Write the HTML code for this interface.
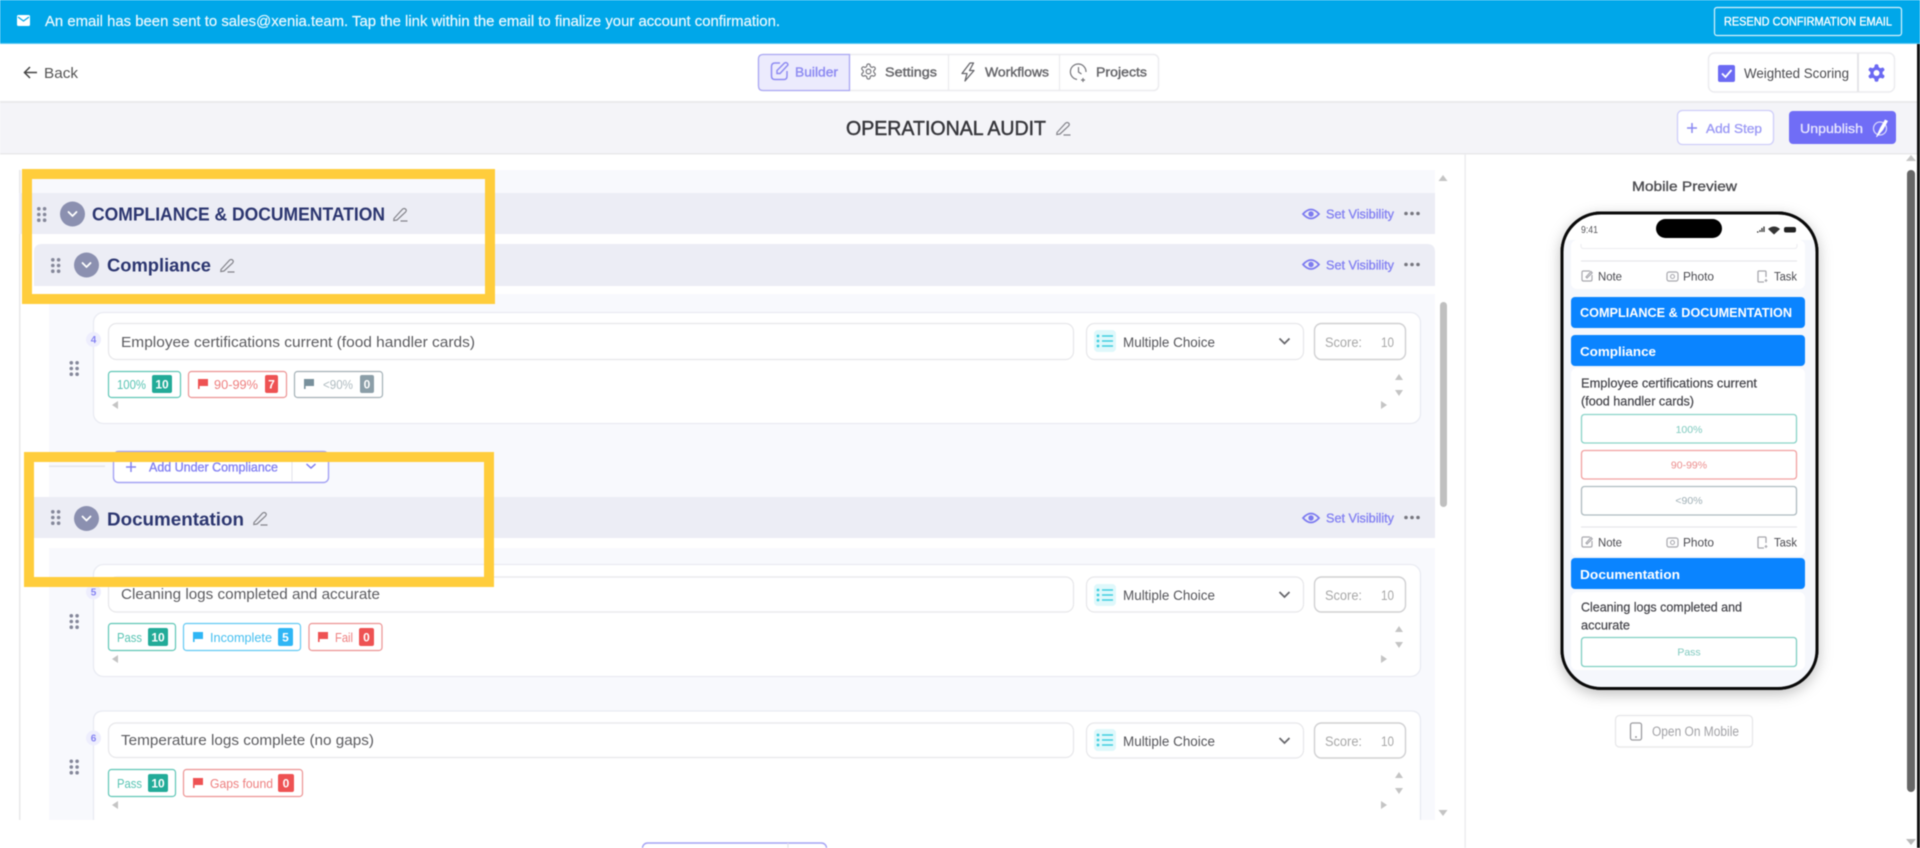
<!DOCTYPE html>
<html lang="en"><head><meta charset="utf-8"><title>Operational Audit Builder</title>
<style>
html,body{margin:0;padding:0;width:1920px;height:848px;overflow:hidden;background:#fff}
svg{display:block;position:absolute;left:0;top:0;filter:blur(.45px)}
text{font-family:"Liberation Sans",sans-serif;font-size:14px}
.b{font-weight:700}
.md{stroke-width:.35px;paint-order:stroke}
.in{fill:#5c5c60;font-size:15px}
.mc{fill:#55555a;font-size:14px}
.sc{fill:#a8a8a8;font-size:13.5px}
.sv{fill:#8583f2;stroke:#8583f2;stroke-width:.35px;font-size:12.5px}
.ch{font-size:12.5px}
.bd{font-size:12px;font-weight:700;fill:#fff;text-anchor:middle}
.tab{fill:#66666a;stroke:#66666a;stroke-width:.4px;font-size:13px}
.pt{fill:#4a4a50;font-size:11.5px}
.pq{fill:#44444a;font-size:12.5px}
.bar{fill:#fff;font-size:13px;font-weight:700}
.op{font-size:10.5px;text-anchor:middle}
</style></head><body>
<svg width="1920" height="848" viewBox="0 0 1920 848" xmlns="http://www.w3.org/2000/svg">
<defs>
<clipPath id="phc"><rect x="1563" y="214" width="253" height="473" rx="37"/></clipPath>
<path id="gear" d="M12.22 2h-.44a2 2 0 0 0-2 2v.18a2 2 0 0 1-1 1.73l-.43.25a2 2 0 0 1-2 0l-.15-.08a2 2 0 0 0-2.73.73l-.22.38a2 2 0 0 0 .73 2.73l.15.1a2 2 0 0 1 1 1.72v.51a2 2 0 0 1-1 1.74l-.15.09a2 2 0 0 0-.73 2.73l.22.38a2 2 0 0 0 2.73.73l.15-.08a2 2 0 0 1 2 0l.43.25a2 2 0 0 1 1 1.73V20a2 2 0 0 0 2 2h.44a2 2 0 0 0 2-2v-.18a2 2 0 0 1 1-1.73l.43-.25a2 2 0 0 1 2 0l.15.08a2 2 0 0 0 2.73-.73l.22-.39a2 2 0 0 0-.73-2.73l-.15-.08a2 2 0 0 1-1-1.74v-.5a2 2 0 0 1 1-1.74l.15-.09a2 2 0 0 0 .73-2.73l-.22-.38a2 2 0 0 0-2.73-.73l-.15.08a2 2 0 0 1-2 0l-.43-.25a2 2 0 0 1-1-1.73V4a2 2 0 0 0-2-2z"/>
<g id="d"><g fill="#85889a"><circle cx="1.8" cy="1.8" r="1.8"/><circle cx="7.6" cy="1.8" r="1.8"/><circle cx="1.8" cy="7.5" r="1.8"/><circle cx="7.6" cy="7.5" r="1.8"/><circle cx="1.8" cy="13.2" r="1.8"/><circle cx="7.6" cy="13.2" r="1.8"/></g></g>
<g id="c"><circle r="12.5" fill="#8b90b0"/><path d="M-4-2 0 2 4-2" fill="none" stroke="#fff" stroke-width="1.8" stroke-linecap="round" stroke-linejoin="round"/></g>
<g id="p"><path d="M1 11.5 9.5 2.2Q11 .8 12.5 2T12.6 5L4 13 .8 13.5ZM7.5 14H14.5" fill="none" stroke="#85858c" stroke-width="1.2"/></g>
<g id="e"><path d="M-8 0Q0-9 8 0 0 9-8 0Z" fill="none" stroke="#7d7bf0" stroke-width="1.7"/><circle r="2.7" fill="#7d7bf0"/></g>
<g id="m"><circle cx="-6" r="1.8" fill="#77777f"/><circle r="1.8" fill="#77777f"/><circle cx="6" r="1.8" fill="#77777f"/></g>
<g id="f"><path d="M0 0H10V7H1.6V10H0Z"/></g>
<g id="l"><rect width="22" height="22" rx="4" fill="#dff8fb"/><g stroke="#3fcfe0" stroke-width="1.6"><path d="M8 6H19M8 11H19M8 16H19"/></g><g fill="#3fcfe0"><circle cx="4" cy="6" r="1.4"/><circle cx="4" cy="11" r="1.4"/><circle cx="4" cy="16" r="1.4"/></g></g>
<g id="nt"><path d="M9 1H2.5Q1 1 1 2.5V9.5Q1 11 2.5 11H9.5Q11 11 11 9.5V5M5 7 10 1.5 11.2 2.8 6 8Z" fill="none" stroke="#a8a8ae" stroke-width="1.2"/></g>
<g id="ph"><rect x="0" y="2" width="11" height="9" rx="2" fill="none" stroke="#a8a8ae" stroke-width="1.2"/><circle cx="5.5" cy="6.5" r="2" fill="none" stroke="#a8a8ae" stroke-width="1.1"/></g>
<g id="tk"><path d="M7 12H2Q1 12 1 11V2Q1 1 2 1H8Q9 1 9 2V7" fill="none" stroke="#a8a8ae" stroke-width="1.3"/><path d="M9 9V12M7.5 10.5H10.5" stroke="#a8a8ae" stroke-width="1.1"/></g>
</defs>

<!-- base -->
<rect width="1920" height="848" fill="#fff"/>
<rect width="1920" height="43" fill="#00a7e9"/>
<rect y="43" width="1920" height="1" fill="#5cc9f2"/>
<rect y="101" width="1920" height="2" fill="#e9e9ec"/>
<rect y="103" width="1920" height="50" fill="#f4f4f8"/>
<rect y="153" width="1920" height="1.5" fill="#e8e8eb"/>
<rect x="1917" y="44" width="3" height="804" fill="#111"/>

<!-- banner -->
<rect x="17" y="15" width="13" height="11" rx="1.5" fill="#fff"/>
<path d="M18 17 23.500 21 29 17" fill="none" stroke="#00a7e9" stroke-width="1.2"/>
<text x="45" y="26" textLength="735" lengthAdjust="spacingAndGlyphs" fill="#eaf8fe" stroke="#eaf8fe" stroke-width=".2" style="font-size:14.5px">An email has been sent to sales@xenia.team. Tap the link within the email to finalize your account confirmation.</text>
<rect x="1714.5" y="7.5" width="187" height="28" rx="2.5" fill="none" stroke="#d8f2fc" stroke-width="1.2"/>
<text x="1724" y="25.5" textLength="168" lengthAdjust="spacingAndGlyphs" fill="#fff" stroke="#fff" stroke-width=".3" style="font-size:12px">RESEND CONFIRMATION EMAIL</text>

<!-- nav -->
<path d="M37 72.500H25M30 67 24.500 72.500 30 78" fill="none" stroke="#444" stroke-width="1.5"/>
<text x="44" y="78" textLength="34" lengthAdjust="spacingAndGlyphs" fill="#555" style="font-size:14.5px">Back</text>

<rect x="758.5" y="54.5" width="400" height="36" rx="5" fill="#fff" stroke="#ececef" stroke-width="1.5"/>
<path d="M763 54.500H849.500V90.500H763Q758.500 90.500 758.500 86V59Q758.500 54.500 763 54.500Z" fill="#ecebfd" stroke="#aaa7f3" stroke-width="1.3"/>
<path d="M948.500 55V90M1059.500 55V90" stroke="#ececef" stroke-width="1.3"/>
<path d="M780 63H775Q771.500 63 771.500 66.500V76Q771.500 79.500 775 79.500H784Q787 79.500 787 76V71M777 73.500V70.500L784.500 63Q786.500 62 787.500 63.500T787 66L780 73.500Z" fill="none" stroke="#8f8cf2" stroke-width="1.5"/>
<text x="795" y="76.5" textLength="43" lengthAdjust="spacingAndGlyphs" class="tab" style="fill:#8f8cf2;stroke:#8f8cf2">Builder</text>
<use href="#gear" transform="translate(859.5 62.5) scale(.75)" fill="none" stroke="#77777c" stroke-width="1.6"/>
<circle cx="868.5" cy="71.5" r="2.4" fill="none" stroke="#77777c" stroke-width="1.2"/>
<text x="885" y="76.5" textLength="52" lengthAdjust="spacingAndGlyphs" class="tab">Settings</text>
<path d="M970 63 962 73.500H967L965 81 974 70.500H969.500L973.500 63Z" fill="none" stroke="#66666b" stroke-width="1.3" stroke-linejoin="round"/>
<text x="985" y="76.5" textLength="64" lengthAdjust="spacingAndGlyphs" class="tab">Workflows</text>
<path d="M1077 79.500A7.800 7.800 0 1 1 1086 72M1078.500 67V72L1081.500 74M1083 78V82M1081 80H1085" fill="none" stroke="#77777c" stroke-width="1.2"/>
<text x="1096" y="76.5" textLength="51" lengthAdjust="spacingAndGlyphs" class="tab">Projects</text>

<rect x="1708.5" y="53" width="186" height="39" rx="6" fill="#fff" stroke="#ececef" stroke-width="1.5"/>
<path d="M1858 53V92" stroke="#e5e5e8" stroke-width="2"/>
<rect x="1718" y="65" width="17" height="17" rx="2" fill="#6c6af3"/>
<path d="M1722 73.500 1725.500 77 1731.500 70" fill="none" stroke="#fff" stroke-width="1.8"/>
<text x="1744" y="78" textLength="105" lengthAdjust="spacingAndGlyphs" fill="#4c4c50" style="font-size:13.5px">Weighted Scoring</text>
<use href="#gear" transform="translate(1866 62.5) scale(.875)" fill="#6c6af3"/>
<circle cx="1876.5" cy="73" r="3" fill="#fff"/>

<!-- title -->
<text x="846" y="135" textLength="200" lengthAdjust="spacingAndGlyphs" fill="#37373c" stroke="#37373c" stroke-width=".45" style="font-size:20px">OPERATIONAL AUDIT</text>
<use href="#p" x="1056" y="121"/>
<rect x="1677.5" y="110.5" width="96" height="34" rx="5" fill="#fff" stroke="#cfcefa" stroke-width="1.3"/>
<path d="M1692 123V133M1687 128H1697" stroke="#8b89f2" stroke-width="1.5"/>
<text x="1706" y="133" textLength="56" lengthAdjust="spacingAndGlyphs" fill="#9d9bf5" stroke="#9d9bf5" stroke-width=".35" style="font-size:13px">Add Step</text>
<rect x="1789" y="111" width="107" height="33" rx="4" fill="#706df6"/>
<text x="1800" y="133" textLength="63" lengthAdjust="spacingAndGlyphs" fill="#e5e4fe" stroke="#e5e4fe" stroke-width=".35" style="font-size:13px">Unpublish</text>
<circle cx="1880" cy="128.500" r="6.500" fill="none" stroke="#d6d5fd" stroke-width="1.3"/>
<path d="M1876 137 1880 128 1885 119.500 1888 121 1883 130 1877 137Z" fill="#fff"/>

<!-- builder panel -->
<rect x="19" y="170" width="1416" height="64" fill="#f8f9fd"/>
<rect x="49" y="294" width="1386" height="526" fill="#f8f9fd"/>
<rect x="19" y="170" width="1.5" height="650" fill="#e8e8ea"/>
<rect x="19" y="193" width="1416" height="41" fill="#ecedf5"/>
<path d="M34 286V252Q34 244 42 244H1427Q1435 244 1435 252V286Z" fill="#ecedf5"/>
<rect x="34" y="497" width="1401" height="41" fill="#ecedf5"/>
<rect x="34" y="538" width="1401" height="10" fill="#fff"/>
<rect x="34" y="234" width="1401" height="10" fill="#fff"/>
<rect x="34" y="286" width="1401" height="8" fill="#fff"/>

<use href="#d" x="37" y="207"/><use href="#c" x="72.5" y="214"/>
<text x="92" y="220.5" textLength="293" lengthAdjust="spacingAndGlyphs" fill="#2c3670" class="b" style="font-size:18px">COMPLIANCE &amp; DOCUMENTATION</text>
<use href="#p" x="393" y="207"/>
<use href="#e" x="1311" y="214"/><text x="1326" y="218.5" textLength="68" lengthAdjust="spacingAndGlyphs" class="sv">Set Visibility</text><use href="#m" x="1412" y="213.5"/>

<use href="#d" x="51" y="258"/><use href="#c" x="86.5" y="265"/>
<text x="107" y="271.5" textLength="104" lengthAdjust="spacingAndGlyphs" fill="#2c3670" class="b" style="font-size:18px">Compliance</text>
<use href="#p" x="220" y="258"/>
<use href="#e" x="1311" y="264.5"/><text x="1326" y="269.5" textLength="68" lengthAdjust="spacingAndGlyphs" class="sv">Set Visibility</text><use href="#m" x="1412" y="264.5"/>

<!-- card 1 -->
<rect x="93.5" y="312.5" width="1327" height="111" rx="10" fill="#fff" stroke="#e9ebf2" stroke-width="1.3"/>
<rect x="108.5" y="323.5" width="965" height="36" rx="8" fill="#fff" stroke="#e7e7ea" stroke-width="1.2"/>
<circle cx="93.5" cy="339.5" r="7.5" fill="#eeeefd"/><text x="93.5" y="343" text-anchor="middle" fill="#8583f2" class="b" style="font-size:10px">4</text>
<text x="121" y="347" textLength="354" lengthAdjust="spacingAndGlyphs" class="in">Employee certifications current (food handler cards)</text>
<use href="#d" x="69.5" y="361"/>
<rect x="108.5" y="371.5" width="72" height="26" rx="3" fill="#fff" stroke="#5fc6b6" stroke-width="1.2"/>
<text x="117" y="389" textLength="29" lengthAdjust="spacingAndGlyphs" fill="#58c4b3" class="ch">100%</text>
<rect x="152" y="375" width="20" height="18" rx="2" fill="#22ab98"/><text x="162" y="388.5" class="bd">10</text>
<rect x="188.5" y="371.5" width="98" height="26" rx="3" fill="#fff" stroke="#ec9393" stroke-width="1.2"/>
<use href="#f" x="198" y="379" fill="#ee5253"/>
<text x="214" y="389" textLength="44" lengthAdjust="spacingAndGlyphs" fill="#ee7f7f" class="ch">90-99%</text>
<rect x="265" y="375" width="13" height="18" rx="2" fill="#ee5253"/><text x="271.5" y="388.5" class="bd">7</text>
<rect x="294.5" y="371.5" width="88" height="26" rx="3" fill="#fff" stroke="#a3b0b6" stroke-width="1.2"/>
<use href="#f" x="304" y="379" fill="#78909c"/>
<text x="323" y="389" textLength="30" lengthAdjust="spacingAndGlyphs" fill="#b0bcc1" class="ch">&lt;90%</text>
<rect x="360" y="375" width="14" height="18" rx="2" fill="#8b9ea8"/><text x="367" y="388.5" class="bd">0</text>
<path d="M118 401V409L112 405Z" fill="#c4c4c4"/>
<rect x="1086.5" y="323.5" width="217" height="36" rx="8" fill="#fff" stroke="#e7e7ea" stroke-width="1.2"/>
<use href="#l" x="1094" y="330"/>
<text x="1123" y="347" textLength="92" lengthAdjust="spacingAndGlyphs" class="mc">Multiple Choice</text>
<path d="M1279.500 338.500 1284.500 343.500 1289.500 338.500" fill="none" stroke="#66666b" stroke-width="1.7"/>
<rect x="1314.5" y="323.5" width="91" height="36" rx="7" fill="#fff" stroke="#d0d0d2" stroke-width="1.4"/>
<text x="1325" y="347" textLength="37" lengthAdjust="spacingAndGlyphs" class="sc">Score:</text>
<text x="1381" y="347" textLength="13" lengthAdjust="spacingAndGlyphs" class="sc">10</text>
<path d="M1395 380 1399 374 1403 380ZM1395 390 1399 396 1403 390ZM1381 401V409L1387 405Z" fill="#c4c4c4"/>

<!-- add under compliance -->
<rect x="49" y="465.5" width="56" height="1.5" fill="#e4e5ea"/>
<rect x="113.5" y="451.5" width="215" height="31" rx="5" fill="#fff" stroke="#a5a3f4" stroke-width="1.4"/>
<path d="M292 452V482" stroke="#e6e6ee" stroke-width="1.2"/>
<path d="M131 462V472M126 467H136" stroke="#8583f2" stroke-width="1.5"/>
<text x="149" y="471.5" textLength="129" lengthAdjust="spacingAndGlyphs" fill="#8583f2" stroke="#8583f2" stroke-width=".35" style="font-size:12.5px">Add Under Compliance</text>
<path d="M306.500 464 311 468 315.500 464" fill="none" stroke="#7d7bf0" stroke-width="1.5"/>

<!-- documentation -->
<use href="#d" x="51" y="510"/><use href="#c" x="86.5" y="518.5"/>
<text x="107" y="525.5" textLength="137" lengthAdjust="spacingAndGlyphs" fill="#2c3670" class="b" style="font-size:18px">Documentation</text>
<use href="#p" x="253" y="511"/>
<use href="#e" x="1311" y="518"/><text x="1326" y="522.5" textLength="68" lengthAdjust="spacingAndGlyphs" class="sv">Set Visibility</text><use href="#m" x="1412" y="517.5"/>

<!-- card 2 -->
<rect x="93.5" y="564.5" width="1327" height="112" rx="10" fill="#fff" stroke="#e9ebf2" stroke-width="1.3"/>
<rect x="108.5" y="577" width="965" height="35" rx="8" fill="#fff" stroke="#e7e7ea" stroke-width="1.2"/>
<circle cx="93.5" cy="592" r="7.5" fill="#eeeefd"/><text x="93.5" y="595.5" text-anchor="middle" fill="#8583f2" class="b" style="font-size:10px">5</text>
<text x="121" y="599" textLength="259" lengthAdjust="spacingAndGlyphs" class="in">Cleaning logs completed and accurate</text>
<use href="#d" x="69.5" y="614"/>
<rect x="108.5" y="623.5" width="67" height="27" rx="3" fill="#fff" stroke="#5fc6b6" stroke-width="1.2"/>
<text x="117" y="642" textLength="25" lengthAdjust="spacingAndGlyphs" fill="#58c4b3" class="ch">Pass</text>
<rect x="148" y="628" width="20" height="18" rx="2" fill="#22ab98"/><text x="158" y="641.5" class="bd">10</text>
<rect x="183.5" y="623.5" width="117" height="27" rx="3" fill="#fff" stroke="#62c9f3" stroke-width="1.2"/>
<use href="#f" x="193" y="632" fill="#2fb6f5"/>
<text x="210" y="642" textLength="62" lengthAdjust="spacingAndGlyphs" fill="#45bff0" class="ch">Incomplete</text>
<rect x="278" y="628" width="15" height="18" rx="2" fill="#2fb6f5"/><text x="285.5" y="641.5" class="bd">5</text>
<rect x="309" y="623.5" width="73" height="27" rx="3" fill="#fff" stroke="#ec9393" stroke-width="1.2"/>
<use href="#f" x="318" y="632" fill="#ee5253"/>
<text x="335" y="642" textLength="18" lengthAdjust="spacingAndGlyphs" fill="#ee7f7f" class="ch">Fail</text>
<rect x="359" y="628" width="15" height="18" rx="2" fill="#ee5253"/><text x="366.5" y="641.5" class="bd">0</text>
<path d="M118 655V663L112 659Z" fill="#c4c4c4"/>
<rect x="1086.5" y="577" width="217" height="35" rx="8" fill="#fff" stroke="#e7e7ea" stroke-width="1.2"/>
<use href="#l" x="1094" y="584"/>
<text x="1123" y="600" textLength="92" lengthAdjust="spacingAndGlyphs" class="mc">Multiple Choice</text>
<path d="M1279.500 592 1284.500 597 1289.500 592" fill="none" stroke="#66666b" stroke-width="1.7"/>
<rect x="1314.5" y="577" width="91" height="35" rx="7" fill="#fff" stroke="#d0d0d2" stroke-width="1.4"/>
<text x="1325" y="600" textLength="37" lengthAdjust="spacingAndGlyphs" class="sc">Score:</text>
<text x="1381" y="600" textLength="13" lengthAdjust="spacingAndGlyphs" class="sc">10</text>
<path d="M1395 632 1399 626 1403 632ZM1395 642 1399 648 1403 642ZM1381 655V663L1387 659Z" fill="#c4c4c4"/>

<!-- card 3 -->
<path d="M93.500 820V721Q93.500 711 103.500 711H1411Q1420.500 711 1420.500 721V820" fill="#fff" stroke="#e9ebf2" stroke-width="1.3"/>
<rect x="108.5" y="723" width="965" height="34.5" rx="8" fill="#fff" stroke="#e7e7ea" stroke-width="1.2"/>
<circle cx="93.5" cy="738" r="7.5" fill="#eeeefd"/><text x="93.5" y="741.5" text-anchor="middle" fill="#8583f2" class="b" style="font-size:10px">6</text>
<text x="121" y="745" textLength="253" lengthAdjust="spacingAndGlyphs" class="in">Temperature logs complete (no gaps)</text>
<use href="#d" x="69.5" y="759.5"/>
<rect x="108.5" y="769.5" width="67" height="27" rx="3" fill="#fff" stroke="#5fc6b6" stroke-width="1.2"/>
<text x="117" y="788" textLength="25" lengthAdjust="spacingAndGlyphs" fill="#58c4b3" class="ch">Pass</text>
<rect x="148" y="774" width="20" height="18" rx="2" fill="#22ab98"/><text x="158" y="787.5" class="bd">10</text>
<rect x="183.5" y="769.5" width="119" height="27" rx="3" fill="#fff" stroke="#ec9393" stroke-width="1.2"/>
<use href="#f" x="193" y="778" fill="#ee5253"/>
<text x="210" y="788" textLength="63" lengthAdjust="spacingAndGlyphs" fill="#ee7f7f" class="ch">Gaps found</text>
<rect x="278" y="774" width="16" height="18" rx="2" fill="#ee5253"/><text x="286" y="787.5" class="bd">0</text>
<path d="M118 801V809L112 805Z" fill="#c4c4c4"/>
<rect x="1086.5" y="723" width="217" height="35" rx="8" fill="#fff" stroke="#e7e7ea" stroke-width="1.2"/>
<use href="#l" x="1094" y="729"/>
<text x="1123" y="746" textLength="92" lengthAdjust="spacingAndGlyphs" class="mc">Multiple Choice</text>
<path d="M1279.500 738 1284.500 743 1289.500 738" fill="none" stroke="#66666b" stroke-width="1.7"/>
<rect x="1314.5" y="723" width="91" height="35" rx="7" fill="#fff" stroke="#d0d0d2" stroke-width="1.4"/>
<text x="1325" y="746" textLength="37" lengthAdjust="spacingAndGlyphs" class="sc">Score:</text>
<text x="1381" y="746" textLength="13" lengthAdjust="spacingAndGlyphs" class="sc">10</text>
<path d="M1395 778 1399 772 1403 778ZM1395 788 1399 794 1403 788ZM1381 801V809L1387 805Z" fill="#c4c4c4"/>

<!-- bottom cover & add button -->
<rect x="0" y="820" width="1464" height="28" fill="#fff"/>
<rect x="642.5" y="843" width="184" height="20" rx="5" fill="#fff" stroke="#a5a3f4" stroke-width="1.4"/>
<path d="M788 843V848" stroke="#e2e2ea" stroke-width="1.2"/>

<!-- panel scrollbar -->
<rect x="1440" y="302" width="7" height="205" rx="3.5" fill="#c0c0c0"/>
<path d="M1438.500 181 1443 175 1447.500 181ZM1438.500 810 1443 816 1447.500 810Z" fill="#c4c4c4"/>
<rect x="1464.5" y="154" width="1.3" height="694" fill="#ebebed"/>

<!-- yellow annotations -->
<rect x="27" y="174" width="463" height="125" fill="none" stroke="#ffcd3c" stroke-width="10"/>
<rect x="29" y="457" width="460" height="125" fill="none" stroke="#ffcd3c" stroke-width="10"/>

<!-- mobile preview -->
<text x="1632" y="191" textLength="105" lengthAdjust="spacingAndGlyphs" fill="#4e4e52" stroke="#4e4e52" stroke-width=".35" style="font-size:14px">Mobile Preview</text>
<rect x="1562" y="213" width="255" height="475.5" rx="39" fill="#fff" stroke="#0a0a0a" stroke-width="3" style="filter:drop-shadow(0 4px 7px rgba(0,0,0,.25))"/>
<rect x="1563.5" y="240" width="252" height="447" fill="#f5f7fc" clip-path="url(#phc)"/>
<rect x="1562" y="213" width="255" height="475.5" rx="39" fill="none" stroke="#0a0a0a" stroke-width="3"/>
<rect x="1656" y="219" width="66" height="19" rx="9.5" fill="#000"/>
<text x="1581" y="233" textLength="17" lengthAdjust="spacingAndGlyphs" fill="#55555a" style="font-size:10px">9:41</text>
<path d="M1757 232H1758.500M1760 232V230M1762 232V228M1764 232V226.500" stroke="#333" stroke-width="1.3"/>
<path d="M1768 229Q1774 224 1780 229L1774 234.500Z" fill="#333"/>
<rect x="1784" y="227" width="12" height="5.5" rx="2" fill="#222"/>

<rect x="1571" y="240" width="234" height="49" rx="6" fill="#fff"/>
<path d="M1581 244V246Q1581 248.500 1584 248.500H1794Q1797 248.500 1797 246V244" fill="none" stroke="#ececef"/>
<path d="M1581 261H1797" stroke="#e8e8ea" stroke-width="1.2"/>
<use href="#nt" x="1581" y="270"/><text x="1598" y="280.5" textLength="24" lengthAdjust="spacingAndGlyphs" class="pt">Note</text>
<use href="#ph" x="1667" y="270"/><text x="1683" y="280.5" textLength="31" lengthAdjust="spacingAndGlyphs" class="pt">Photo</text>
<use href="#tk" x="1757" y="270"/><text x="1774" y="280.5" textLength="23" lengthAdjust="spacingAndGlyphs" class="pt">Task</text>

<rect x="1571" y="297" width="234" height="31" rx="4" fill="#0a84ff"/>
<text x="1580" y="317" textLength="212" lengthAdjust="spacingAndGlyphs" class="bar">COMPLIANCE &amp; DOCUMENTATION</text>
<rect x="1571" y="335" width="234" height="31" rx="4" fill="#0a84ff"/>
<text x="1580" y="356" textLength="76" lengthAdjust="spacingAndGlyphs" class="bar">Compliance</text>

<rect x="1571" y="368" width="234" height="188" rx="6" fill="#fff"/>
<text x="1581" y="387.5" textLength="176" lengthAdjust="spacingAndGlyphs" class="pq" stroke="#44444a" stroke-width=".2">Employee certifications current</text>
<text x="1581" y="405.5" textLength="113" lengthAdjust="spacingAndGlyphs" class="pq" stroke="#44444a" stroke-width=".2">(food handler cards)</text>
<rect x="1581.5" y="414.5" width="215" height="28.5" rx="3" fill="#fff" stroke="#8ad3c8" stroke-width="1.3"/>
<text x="1689" y="433" class="op" fill="#7fcabf">100%</text>
<rect x="1581.5" y="450.5" width="215" height="28.5" rx="3" fill="#fff" stroke="#f1a1a1" stroke-width="1.3"/>
<text x="1689" y="468.5" class="op" fill="#ec8e8e">90-99%</text>
<rect x="1581.5" y="486.5" width="215" height="28.5" rx="3" fill="#fff" stroke="#aebbc0" stroke-width="1.3"/>
<text x="1689" y="504" class="op" fill="#9fafb5">&lt;90%</text>
<path d="M1581 527H1797" stroke="#e8e8ea" stroke-width="1.2"/>
<use href="#nt" x="1581" y="536"/><text x="1598" y="546.5" textLength="24" lengthAdjust="spacingAndGlyphs" class="pt">Note</text>
<use href="#ph" x="1667" y="536"/><text x="1683" y="546.5" textLength="31" lengthAdjust="spacingAndGlyphs" class="pt">Photo</text>
<use href="#tk" x="1757" y="536"/><text x="1774" y="546.5" textLength="23" lengthAdjust="spacingAndGlyphs" class="pt">Task</text>

<rect x="1571" y="558" width="234" height="31" rx="4" fill="#0a84ff"/>
<text x="1580" y="579" textLength="100" lengthAdjust="spacingAndGlyphs" class="bar">Documentation</text>
<rect x="1571" y="592" width="234" height="78" rx="6" fill="#fff"/>
<text x="1581" y="611.5" textLength="161" lengthAdjust="spacingAndGlyphs" class="pq" stroke="#44444a" stroke-width=".2">Cleaning logs completed and</text>
<text x="1581" y="629.5" textLength="49" lengthAdjust="spacingAndGlyphs" class="pq" stroke="#44444a" stroke-width=".2">accurate</text>
<rect x="1581.5" y="637.5" width="215" height="29" rx="3" fill="#fff" stroke="#7fcfc2" stroke-width="1.3"/>
<text x="1689" y="655.5" class="op" fill="#7fcabf">Pass</text>

<rect x="1615.5" y="715.5" width="137" height="31.5" rx="4" fill="#fff" stroke="#e6e6e8" stroke-width="1.2"/>
<rect x="1630.5" y="723" width="11" height="17" rx="2" fill="none" stroke="#9c9ca0" stroke-width="1.3"/>
<circle cx="1636" cy="737" r=".9" fill="#88888c"/>
<text x="1652" y="736" textLength="87" lengthAdjust="spacingAndGlyphs" fill="#a2a2a6" style="font-size:13.5px">Open On Mobile</text>

<!-- page scrollbar -->
<rect x="1907" y="170" width="8" height="622" rx="4" fill="#666"/>
<path d="M1906 161 1911 155 1916 161Z" fill="#c4c4c4"/>
<path d="M1906 839 1911 845 1916 839Z" fill="#b8b8b8"/>
</svg>
</body></html>
